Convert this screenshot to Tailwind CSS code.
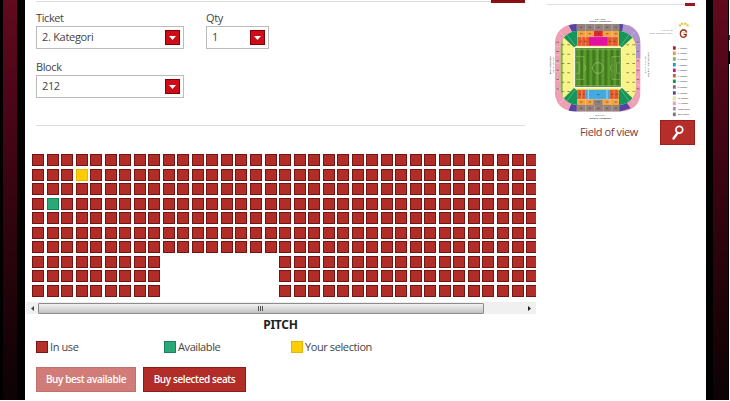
<!DOCTYPE html>
<html lang="en">
<head>
    <meta charset="UTF-8">
    <meta name="viewport" content="width=device-width, initial-scale=1.0">
    <title>Select Seats</title>
    <script src="https://cdn.jsdelivr.net/npm/@tailwindcss/browser@4"></script>
</head>
<body class="relative flex w-[730px] h-[401px] overflow-hidden bg-white font-['Open_Sans','Noto_Sans',sans-serif] text-[11px] tracking-[-0.4px] text-[#444]">
    <!-- Left frame -->
    <div class="w-[25px] h-[400px] shrink-0 bg-black pl-[3px]">
        <div class="w-[14px] h-full bg-linear-to-b from-[#620a1e] via-[#3a0412] via-45% to-[#0c0204]"></div>
    </div>

    <!-- Seat selection -->
    <main class="w-[511px] shrink-0">
        <div class="ml-[11px] flex h-[3px]">
            <div class="w-[455px] h-[2px] border-b border-[#ddd]"></div>
            <div class="w-[34px] h-[3px] bg-[#8b1016]"></div>
        </div>

        <!-- Filters -->
        <div class="ml-[11px] w-[489px] h-[123px] border-b border-[#ddd] pt-[8px]">
            <div class="flex gap-[22px]">
                <div class="w-[148px]">
                    <label class="block h-[15px] leading-[14px]">Ticket</label>
                    <div class="flex items-center justify-between h-[23px] border border-[#bbb] pl-[5px] pr-[3px]">
                        <span class="tracking-[-0.3px]">2. Kategori</span>
                        <button class="flex items-center justify-center size-[15px] bg-[#cc0c16] border border-[#800008]">
                            <svg class="w-[7px] h-[4px]" viewBox="0 0 7 4"><path d="M0 0h7L3.5 4z" fill="#fff"/></svg>
                        </button>
                    </div>
                </div>
                <div class="w-[63px]">
                    <label class="block h-[15px] leading-[14px]">Qty</label>
                    <div class="flex items-center justify-between h-[23px] border border-[#bbb] pl-[5px] pr-[3px]">
                        <span>1</span>
                        <button class="flex items-center justify-center size-[15px] bg-[#cc0c16] border border-[#800008]">
                            <svg class="w-[7px] h-[4px]" viewBox="0 0 7 4"><path d="M0 0h7L3.5 4z" fill="#fff"/></svg>
                        </button>
                    </div>
                </div>
            </div>
            <div class="w-[148px] mt-[11px]">
                <label class="block h-[15px] leading-[14px]">Block</label>
                <div class="flex items-center justify-between h-[23px] border border-[#bbb] pl-[5px] pr-[3px]">
                    <span>212</span>
                    <button class="flex items-center justify-center size-[15px] bg-[#cc0c16] border border-[#800008]">
                        <svg class="w-[7px] h-[4px]" viewBox="0 0 7 4"><path d="M0 0h7L3.5 4z" fill="#fff"/></svg>
                    </button>
                </div>
            </div>
        </div>

        <!-- Seat map -->
        <div id="seats" class="mt-[28px] ml-[7px] w-[504px] h-[143px] flex flex-col gap-[2.52px] overflow-hidden"></div>

        <!-- Scrollbar -->
        <div class="mt-[5px] ml-px flex items-center h-[12px] bg-[#f0f0f0]">
            <div class="w-[12px] flex justify-center"><svg class="w-[3px] h-[5px]" viewBox="0 0 3 5"><path d="M3 0v5L0 2.5z" fill="#444"/></svg></div>
            <div class="w-[446px] h-[11px] flex items-center justify-center gap-px border border-[#8c8c8c] rounded-[1px] bg-linear-to-b from-[#f2f2f2] to-[#c2c2c2]">
                <i class="w-px h-[5px] bg-[#555] -ml-[2px]"></i>
                <i class="w-px h-[5px] bg-[#555]"></i>
                <i class="w-px h-[5px] bg-[#555]"></i>
            </div>
            <div class="ml-auto w-[14px] flex justify-center"><svg class="w-[3px] h-[5px]" viewBox="0 0 3 5"><path d="M0 0v5l3-2.5z" fill="#222"/></svg></div>
        </div>

        <div class="mt-[3px] h-[16px] text-center leading-[16px] text-[12px] font-bold font-['Noto_Sans',sans-serif] tracking-[-0.2px] text-[#222]">PITCH</div>

        <!-- Legend -->
        <div class="mt-[6px] ml-[11px] flex h-[16px] leading-[16px]">
            <div class="w-[128px] flex items-center gap-[2px]"><span class="size-[12px] bg-[#b5302a] border border-[#7c1614]"></span>In use</div>
            <div class="w-[127px] flex items-center gap-[2px]"><span class="size-[12px] bg-[#2aa87a] border border-[#16825a]"></span>Available</div>
            <div class="flex items-center gap-[2px]"><span class="size-[12px] bg-[#fccc04] border border-[#e8b400]"></span>Your selection</div>
        </div>

        <!-- Actions -->
        <div class="mt-[12px] ml-[11px] flex gap-[7px] text-white font-semibold text-[10px] tracking-[-0.4px]">
            <button class="w-[100px] h-[25px] bg-[#d17c79] border border-[#c0706d]">Buy best available</button>
            <button class="w-[103px] h-[25px] bg-[#b22c28] border border-[#8c1c1a]">Buy selected seats</button>
        </div>
    </main>

    <!-- Stadium plan -->
    <aside class="w-[170px] shrink-0 pl-[11px]">
        <div class="flex w-[148px] h-[6px] items-end">
            <div class="w-[138px] h-[2px] border-t border-[#ddd]"></div>
            <div class="w-[10px] h-[3px] bg-[#9c1820]"></div>
        </div>
        <svg class="mt-[9px] w-[148px] h-[105px] tracking-normal" viewBox="21 45 444 315" font-family="Noto Sans, sans-serif">
            <defs>
                <clipPath id="bowl"><path d="M106 72H242Q302 76 302 137V270Q302 331 242 335H106Q44 331 44 270V137Q44 76 106 72Z"/></clipPath>
                <clipPath id="lower"><path d="M110 92H238Q288 100 288 150V257Q288 308 238 315H110Q61 308 61 257V150Q61 100 110 92Z"/></clipPath>
            </defs>
            <!-- Upper tier -->
            <g clip-path="url(#bowl)">
                <path d="M44 72H302V335H44Z" fill="#efa0b4"/>
                <path d="M238 72H302V174H238Z" fill="#b294cc"/>
                <path d="M110 72H238V93H110ZM110 314H238V335H110Z" fill="#94827e"/>
                <path d="M84 72H110V93L98 98ZM238 72H250L246 96L238 92ZM84 335H110V313L96 307ZM238 335V313L258 305L272 325Z" fill="#5446a0"/>
                <path d="M137 72V92M164 72V92M190 72V92M216 72V92M137 315V335M164 315V335M190 315V335M216 315V335M44 140H61M44 165H61M44 190H61M44 215H61M44 240H61M44 265H61M288 130H302M288 155H302M288 180H302M288 205H302M288 230H302M288 255H302M60 95L75 112M285 95L268 112M58 310L74 295M285 310L270 295" stroke="#fff" stroke-opacity=".5" stroke-width="1.5"/>
            </g>
            <!-- Lower tier -->
            <g clip-path="url(#lower)">
                <path d="M61 92H288V315H61Z" fill="#f8f48a"/>
                <path d="M61 112L68 118V290L61 285Z" fill="#78b848"/>
                <path d="M78 92H112V136L102 142L72 113ZM236 92H270L277 113L246 142L236 136ZM72 294L102 264L112 272V315H80ZM277 294L246 264L236 272V315H268Z" fill="#16955a"/>
                <path d="M112 92H236V137H112ZM112 269H236V315H112Z" fill="#f4a33f"/>
                <path d="M113 110H147V137H113ZM201 110H233V137H201ZM112 269H136V297H112ZM209 269H235V297H209Z" fill="#e4592b"/>
                <path d="M162 92H188V110H162Z" fill="#dc2930"/>
                <path d="M147 110H202V137H147Z" fill="#e411a0"/>
                <path d="M136 269H209V298H136Z" fill="#43a9e2"/>
                <path d="M161 299H187V315H161Z" fill="#8a8180"/>
                <path d="M137 92V137M216 92V137M125 110V137M125 269V297M222 269V297M137 297V315M210 297V315M112 110H236M112 298H236M80 103L105 136M268 103L243 136M80 304L105 270M268 304L243 270" stroke="#fff" stroke-opacity=".55" stroke-width="1.5"/>
                <path d="M145 269V297M201 269V297" stroke="#d8efff" stroke-width="2"/>
            </g>
            <!-- Section numbers -->
            <g stroke="#443c30" stroke-opacity=".6" stroke-width="3" stroke-dasharray="7 19" fill="none">
                <path d="M120 82H236M120 325H236M120 101H236M120 306H236"/>
                <path d="M119 124H145M207 124H233M116 283H134M214 283H233M171 284H180" stroke-dasharray="7 6"/>
            </g>
            <g stroke="#5c5838" stroke-opacity=".65" stroke-width="8" stroke-dasharray="3 25" fill="none">
                <path d="M69 133V275M86 133V285M263 133V285M281 133V275M53 125V280M294 125V280"/>
            </g>
            <!-- Pitch -->
            <path d="M104 143H244V262H104Z" fill="#427b1e" stroke="#fff" stroke-width="3"/>
            <path d="M112 145H121V260H112ZM130 145H139V260H130ZM148 145H157V260H148ZM166 145H175V260H166ZM184 145H193V260H184ZM202 145H211V260H202ZM220 145H229V260H220Z" fill="#5b9a2c"/>
            <path d="M108 149H240V257H108ZM174 149V257M108 170H132V238H108M108 188H118V220H108M240 170H216V238H240M240 188H230V220H240M132 194Q142 204 132 214M216 194Q206 204 216 214" fill="none" stroke="#b4d68c" stroke-width="1.2"/>
            <circle cx="174" cy="204" r="16" fill="none" stroke="#b4d68c" stroke-width="1.5"/>
            <!-- Stand names -->
            <g fill="#333" font-size="7" text-anchor="middle">
                <text x="181" y="59" textLength="34" lengthAdjust="spacingAndGlyphs">KUZEY / NORTH</text>
                <text x="181" y="67" textLength="65" font-weight="bold">KUZEY TRİBÜNÜ</text>
                <text x="181" y="347" textLength="30">GÜNEY</text>
                <text x="181" y="356" textLength="65" font-weight="bold">GÜNEY TRİBÜNÜ</text>
                <text transform="translate(34 196) rotate(-90)" textLength="54" font-weight="bold">BATI TRİBÜNÜ</text>
                <text transform="translate(42 196) rotate(-90)" textLength="48">WEST STAND</text>
                <text transform="translate(319 194) rotate(-90)" textLength="50">EAST STAND</text>
                <text transform="translate(328 194) rotate(-90)" textLength="74" font-weight="bold">DOĞU TRİBÜNÜ</text>
            </g>
            <g fill="#777" font-size="7" text-anchor="end">
                <text x="399" y="93" textLength="36" lengthAdjust="spacingAndGlyphs">ALİ SAMİ YEN</text>
                <text x="399" y="102" textLength="70" lengthAdjust="spacingAndGlyphs">TÜRK TELEKOM ARENA</text>
            </g>
            <path d="M406 60V122" stroke="#ddd"/>
            <!-- Club crest -->
            <g fill="#e9c53c">
                <path id="star" d="M420 71l1.5 3 3.500 .5-2.500 2.500 1 3.500-3.500-2-3.500 2 1-3.500-2.500-2.500 3.500-.5z"/>
                <use href="#star" x="6" y="-5"/>
                <use href="#star" x="16" y="-5"/>
                <use href="#star" x="23"/>
            </g>
            <path d="M440 98Q438 89 430 90Q421 91 421 102Q422 112 431 112Q439 111 439 103H431" fill="none" stroke="#9c3422" stroke-width="4"/>
            <path d="M424 92L430 88L437 92" fill="none" stroke="#a83a22" stroke-width="2.5"/>
            <path d="M428 98H436M431 102V107" stroke="#e5a32d" stroke-width="2"/>
            <!-- Price categories -->
            <g stroke="#777" stroke-width=".5">
                <path d="M399 139h8v10h-8z" fill="#b3142c"/>
                <path d="M399 155h8v10h-8z" fill="#f0a044"/>
                <path d="M399 172h8v10h-8z" fill="#7ebd42"/>
                <path d="M399 189h8v10h-8z" fill="#18a0d8"/>
                <path d="M399 206h8v10h-8z" fill="#c0149c"/>
                <path d="M399 222h8v10h-8z" fill="#d55e2a"/>
                <path d="M399 239h8v10h-8z" fill="#128c50"/>
                <path d="M399 256h8v10h-8z" fill="#776c68"/>
                <path d="M399 274h8v10h-8z" fill="#4c409c"/>
                <path d="M399 290h8v10h-8z" fill="#f8f490"/>
                <path d="M399 305h8v10h-8z" fill="#f0a4b8"/>
                <path d="M399 321h8v10h-8z" fill="#b48cac"/>
                <path d="M399 338h8v10h-8z" fill="#77757c"/>
            </g>
            <g fill="#222" font-size="7.5">
                <text x="413" y="147" textLength="29" lengthAdjust="spacingAndGlyphs">1. Kategori</text>
                <text x="413" y="163" textLength="29" lengthAdjust="spacingAndGlyphs">2. Kategori</text>
                <text x="413" y="180" textLength="29" lengthAdjust="spacingAndGlyphs">3. Kategori</text>
                <text x="413" y="197" textLength="29" lengthAdjust="spacingAndGlyphs">4. Kategori</text>
                <text x="413" y="214" textLength="29" lengthAdjust="spacingAndGlyphs">5. Kategori</text>
                <text x="413" y="230" textLength="29" lengthAdjust="spacingAndGlyphs">6. Kategori</text>
                <text x="413" y="247" textLength="29" lengthAdjust="spacingAndGlyphs">7. Kategori</text>
                <text x="413" y="264" textLength="29" lengthAdjust="spacingAndGlyphs">8. Kategori</text>
                <text x="413" y="282" textLength="29" lengthAdjust="spacingAndGlyphs">9. Kategori</text>
                <text x="413" y="298" textLength="32" lengthAdjust="spacingAndGlyphs">10. Kategori</text>
                <text x="413" y="313" textLength="32" lengthAdjust="spacingAndGlyphs">11. Kategori</text>
                <text x="413" y="329" textLength="36" lengthAdjust="spacingAndGlyphs">Misafir Takım</text>
                <text x="413" y="346" textLength="34" lengthAdjust="spacingAndGlyphs">Giriş Kapısı</text>
            </g>
        </svg>
        <div class="flex w-[148px] h-[25px] items-center">
            <span class="w-[113px] pl-[33px] text-[#7a3a38] whitespace-nowrap">Field of view</span>
            <button class="w-[35px] h-[25px] flex items-center justify-center bg-[#b52e2a] border border-[#98201e]">
                <svg class="w-[12px] h-[15px]" viewBox="0 0 12 15" fill="none" stroke="#fff"><circle cx="7.3" cy="4.8" r="3.4" stroke-width="1.7"/><path d="M5.5 8L1.5 13.5" stroke-width="2.3" stroke-linecap="round"/></svg>
            </button>
        </div>
    </aside>

    <!-- Right frame -->
    <div class="w-[23px] h-[400px] shrink-0 bg-black pl-[7px]">
        <div class="w-[15px] h-full bg-linear-to-b from-[#620a1e] via-[#3a0412] via-45% to-[#0c0204]"></div>
    </div>
    <div class="w-px shrink-0 pt-[35px]">
        <div class="h-[5px] bg-[#444]"></div>
        <div class="mt-[11px] h-[13px] bg-black"></div>
    </div>

    <script>
        const seatClasses = {
            used: 'size-[12px] shrink-0 bg-[#b22d27] border border-[#721512]',
            free: 'size-[12px] shrink-0 bg-[#2aa87a] border border-[#16825a]',
            mine: 'size-[12px] shrink-0 bg-[#fccc04] border border-[#e8b400]',
            none: 'size-[12px] shrink-0'
        };
        const seats = document.getElementById('seats');

        for (let r = 0; r < 10; r++) {
            const row = document.createElement('div');
            row.className = 'flex shrink-0 gap-[2.54px]';
            for (let c = 0; c < 35; c++) {
                let type = 'used';
                if (r === 1 && c === 3) type = 'mine';
                if (r === 3 && c === 1) type = 'free';
                if (r > 6 && c > 8 && c < 17) type = 'none';
                const seat = document.createElement('span');
                seat.className = seatClasses[type];
                row.appendChild(seat);
            }
            seats.appendChild(row);
        }
    </script>
</body>
</html>
